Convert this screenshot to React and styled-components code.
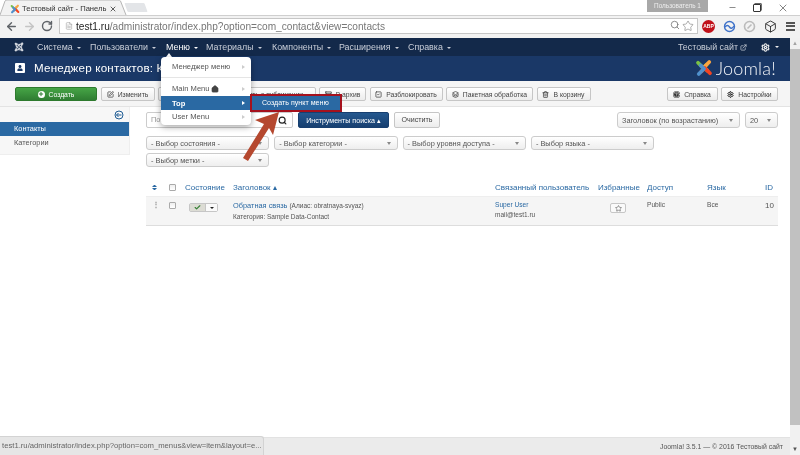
import React from "react";
import styled, { createGlobalStyle } from "styled-components";
import { ArrowLeft, ArrowRight, RotateCw, Search, Star, X, Minus, Box, Check, Settings, SquarePen, Archive, SquareCheck, Trash2, ExternalLink, FileText, Layers, House, Plus, CircleHelp } from "lucide-react";
import { FaJoomla, FaUser } from "react-icons/fa";

const Global = createGlobalStyle`
	html, body {
		margin: 0;
		padding: 0;
		background: #fff;
		overflow: hidden;
	}
	* {
		box-sizing: border-box;
	}
`;

const Frame = styled.div`
	position: relative;
	width: 800px;
	height: 455px;
	overflow: hidden;
	display: flex;
	flex-direction: column;
	font-family: "Liberation Sans", Arial, sans-serif;
	color: #555;
	background: #fff;
	filter: blur(0.3px);
`;

const TabStrip = styled.div`
	height: 15px;
	display: flex;
	align-items: flex-start;
	background: #fff;
`;

const Tab = styled.div`
	position: relative;
	width: 126px;
	height: 15px;
	padding: 2px 0 0 10px;
	display: flex;
	align-items: center;
	font-size: 7.6px;
	color: #333;
	white-space: nowrap;
`;

const TabShape = styled.svg`
	position: absolute;
	left: 0;
	top: 0;
`;

const TabFavicon = styled.span`
	position: relative;
	display: flex;
	margin-right: 2px;
`;

const TabTitle = styled.span`
	position: relative;
	width: 85px;
	overflow: hidden;
`;

const TabClose = styled.span`
	position: relative;
	display: flex;
	margin-left: 2px;
	color: #444;
`;

const NewTab = styled.div`
	width: 20px;
	height: 9px;
	margin-top: 3px;
	background: #e3e5e8;
	transform: skewX(20deg);
	border-radius: 1px;
`;

const Profile = styled.div`
	margin-left: auto;
	width: 61px;
	height: 12px;
	background: #a8a8a8;
	color: #eee;
	font-size: 6.4px;
	line-height: 12px;
	text-align: center;
	margin-right: 18px;
`;

const WindowButtons = styled.div`
	display: flex;
	width: 74px;
	height: 15px;
	gap: 13px;
	padding-left: 2px;
	align-items: center;
	color: #333;
`;

const Restore = styled.span`
	display: block;
	width: 8px;
	height: 8px;
	border: 1px solid #333;
	border-radius: 1px;
	margin: 0 3px;
	box-shadow: 1px -1px 0 -0.3px #333;
`;

const AddressBar = styled.div`
	height: 23px;
	display: flex;
	align-items: center;
	background: #f2f2f2;
	border-top: 1px solid #cfcfcf;
	padding: 0 0 2px 2px;
`;

const NavIcon = styled.span`
	width: 18px;
	display: flex;
	justify-content: center;
	color: ${(p) => p.$color || "#5f6368"};
`;

const Omnibox = styled.div`
	width: 639px;
	height: 16px;
	margin-left: 3px;
	background: #fff;
	border: 1px solid #c6c6c6;
	display: flex;
	align-items: center;
	padding: 0 3px 0 5px;
	gap: 3px;
	font-size: 10.15px;
	color: #777;
	white-space: nowrap;
`;

const Host = styled.span`
	color: #222;
`;

const OmniIcons = styled.span`
	margin-left: auto;
	display: flex;
	gap: 2px;
	color: #777;
`;

const Extensions = styled.div`
	display: flex;
	align-items: center;
	margin-left: 4px;
	gap: 7.7px;
`;

const Abp = styled.span`
	width: 13px;
	height: 13px;
	border-radius: 50%;
	background: #c0111a;
	color: #fff;
	font-size: 5px;
	font-weight: bold;
	display: flex;
	align-items: center;
	justify-content: center;
`;

const Hamburger = styled.span`
	width: 9px;
	height: 9px;
	margin-left: 1px;
	border-top: 2px solid #555;
	border-bottom: 2px solid #555;
	position: relative;
	&::after {
		content: "";
		position: absolute;
		left: 0;
		right: 0;
		top: 1.5px;
		height: 2px;
		background: #555;
	}
`;

const SiteRow = styled.div`
	flex: 1;
	display: flex;
	min-height: 0;
`;

const Site = styled.div`
	flex: 1;
	display: flex;
	flex-direction: column;
	min-width: 0;
`;

const Scrollbar = styled.div`
	width: 10px;
	background: #f1f1f1;
	display: flex;
	flex-direction: column;
	align-items: center;
	font-size: 6px;
`;

const ScrollArrow = styled.span`
	height: 11px;
	line-height: 11px;
	color: ${(p) => p.$dark ? "#555" : "#a3a3a3"};
`;

const ScrollThumb = styled.div`
	width: 100%;
	flex: 1;
	background: #c1c1c1;
	margin-bottom: 19px;
`;

const NavBar = styled.div`
	height: 18px;
	background: #13294a;
	display: flex;
	align-items: center;
	padding-left: 14px;
	font-size: 8.9px;
	color: #c9ced8;
	white-space: nowrap;
`;

const NavLogo = styled.span`
	display: flex;
	width: 23px;
	color: #d5d9e0;
`;

const NavItem = styled.span`
	width: ${(p) => p.$w}px;
	color: ${(p) => p.$active ? "#fff" : "#c9ced8"};
	&::after {
		content: "";
		display: inline-block;
		margin-left: 4px;
		vertical-align: 1px;
		border-top: 2.5px solid currentColor;
		border-left: 2.5px solid transparent;
		border-right: 2.5px solid transparent;
	}
`;

const NavRight = styled.span`
	margin-left: auto;
	display: flex;
	align-items: center;
	gap: 2px;
`;

const GearMenu = styled.span`
	display: flex;
	align-items: center;
	gap: 5px;
	margin: 0 11px 0 14px;
	color: #eee;
`;

const Caret = styled.span`
	display: inline-block;
	border-top: 2.5px solid currentColor;
	border-left: 2.5px solid transparent;
	border-right: 2.5px solid transparent;
`;

const Header = styled.div`
	height: 25px;
	background: #1a3867;
	display: flex;
	align-items: center;
	padding: 0 14px 2px 15px;
	color: #fff;
`;

const HeaderIcon = styled.span`
	display: flex;
	align-items: center;
	justify-content: center;
	width: 10px;
	height: 10px;
	margin-right: 9px;
	border-radius: 1px;
	background: #fff;
	color: #1a3867;
`;

const Title = styled.h1`
	margin: 0;
	font-size: 11.6px;
	font-weight: normal;
	letter-spacing: 0.2px;
	white-space: nowrap;
`;

const Brand = styled.div`
	margin-left: auto;
	display: flex;
	align-items: center;
	gap: 3px;
`;

const BrandName = styled.span`
	font-family: "Lato", sans-serif;
	font-weight: 300;
	font-size: 18px;
	letter-spacing: 0.2px;
	color: #f2f4f8;
`;

const Toolbar = styled.div`
	height: 26px;
	background: #f5f5f5;
	border-bottom: 1px solid #e3e3e3;
	display: flex;
	align-items: flex-start;
	padding: 6px 12px 0 15px;
	gap: 3.5px;
`;

const ToolButton = styled.button`
	width: ${(p) => p.$w}px;
	height: 14px;
	padding: 0;
	border: 1px solid ${(p) => p.$green ? "#2e7a2e" : "#c6c6c6"};
	border-radius: 2px;
	background: ${(p) => p.$green ? "linear-gradient(#46a546, #2f7d32)" : "linear-gradient(#fff, #ececec)"};
	color: ${(p) => p.$green ? "#fff" : "#444"};
	font-family: inherit;
	font-size: 6.8px;
	display: flex;
	align-items: center;
	justify-content: center;
	gap: 4px;
	white-space: nowrap;
	margin-left: ${(p) => p.$push ? "auto" : "0"};
`;

const RoundIcon = styled.span`
	width: 7px;
	height: 7px;
	border-radius: 50%;
	background: ${(p) => p.$bg || "#fff"};
	color: ${(p) => p.$fg || "#2f7d32"};
	display: flex;
	align-items: center;
	justify-content: center;
`;

const Content = styled.div`
	flex: 1;
	display: flex;
	min-height: 0;
`;

const Sidebar = styled.div`
	width: 130px;
	height: 48px;
	background: #f7f7f7;
	border-right: 1px solid #eee;
	border-bottom: 1px solid #eee;
	font-size: 7.4px;
	color: #555;
`;

const SideToggle = styled.div`
	height: 15px;
	display: flex;
	justify-content: flex-end;
	align-items: center;
	padding-right: 5px;
`;

const SideItem = styled.div`
	height: 14px;
	line-height: 14px;
	padding-left: 14px;
	background: ${(p) => p.$active ? "#2a69a3" : "transparent"};
	color: ${(p) => p.$active ? "#fff" : "#555"};
`;

const Main = styled.div`
	flex: 1;
	padding: 5px 12px 0 16px;
	min-width: 0;
`;

const FilterRow = styled.div`
	display: flex;
	align-items: center;
	height: 16px;
	gap: 5px;
`;

const SearchBox = styled.div`
	width: 147px;
	height: 16px;
	display: flex;
	border: 1px solid #ccc;
	border-radius: 2px;
	font-size: 7.4px;
	line-height: 14px;
	color: #999;
	padding-left: 4px;
	background: #fff;
`;

const SearchIcon = styled.span`
	margin-left: auto;
	width: 14px;
	display: flex;
	align-items: center;
	color: #222;
`;

const ActionButton = styled.button`
	width: ${(p) => p.$w}px;
	height: 16px;
	padding: 0;
	border: 1px solid ${(p) => p.$blue ? "#173f70" : "#c6c6c6"};
	border-radius: 2px;
	background: ${(p) => p.$blue ? "linear-gradient(#24588f, #173f70)" : "linear-gradient(#fff, #ececec)"};
	color: ${(p) => p.$blue ? "#fff" : "#444"};
	font-family: inherit;
	font-size: 7.1px;
	white-space: nowrap;
`;

const SelectRows = styled.div`
	display: flex;
	flex-wrap: wrap;
	gap: 3px 5px;
	margin-top: 8px;
	width: 520px;
`;

const Select = styled.div`
	width: ${(p) => p.$w || 123.3}px;
	height: ${(p) => p.$h || 14}px;
	border: 1px solid #ccc;
	border-radius: 3px;
	background: linear-gradient(#fff, #eee);
	display: flex;
	align-items: center;
	justify-content: space-between;
	padding: 0 6px 0 4px;
	font-size: 7.4px;
	color: #555;
	white-space: nowrap;
	margin-left: ${(p) => p.$push ? "auto" : "0"};
	&::after {
		content: "";
		border-top: 3px solid #888;
		border-left: 2px solid transparent;
		border-right: 2px solid transparent;
	}
`;

const Table = styled.div`
	margin-top: 11px;
`;

const TableRow = styled.div`
	display: grid;
	grid-template-columns: 17px 16px 48px 262px 103px 49px 60px 58px 1fr;
	padding-left: 6px;
	align-items: ${(p) => p.$head ? "center" : "start"};
	height: ${(p) => p.$head ? 18 : 30}px;
	background: ${(p) => p.$head ? "transparent" : "#f5f5f5"};
	border-bottom: ${(p) => p.$head ? 0 : 1}px solid #ddd;
	border-top: ${(p) => p.$head ? 0 : 1}px solid #eee;
	padding-top: ${(p) => p.$head ? 0 : 4}px;
	color: ${(p) => p.$head ? "#2a69a3" : "#555"};
	font-size: ${(p) => p.$head ? 8 : 6.6}px;
	white-space: nowrap;
`;

const Sort = styled.span`
	display: flex;
	flex-direction: column;
	gap: 1px;
	width: 5px;
	&::before, &::after {
		content: "";
		border-left: 2px solid transparent;
		border-right: 2px solid transparent;
	}
	&::before {
		border-bottom: 2.5px solid #2a69a3;
	}
	&::after {
		border-top: 2.5px solid #2a69a3;
	}
`;

const Checkbox = styled.span`
	display: block;
	width: 7px;
	height: 7px;
	margin-top: 1px;
	border: 1px solid #aaa;
	border-radius: 1px;
	background: linear-gradient(#eee, #fff);
`;

const Grip = styled.span`
	color: #999;
	font-size: 8px;
	line-height: 8px;
	font-weight: bold;
`;

const StatusToggle = styled.span`
	display: flex;
	width: 29px;
	height: 9px;
	margin-top: 2px;
	border: 1px solid #c6c6c6;
	border-radius: 2px;
	margin-left: 4px;
`;

const StatusCheck = styled.span`
	width: 15px;
	background: #dcdcd4;
	display: flex;
	align-items: center;
	justify-content: center;
	color: #378137;
`;

const StatusDrop = styled.span`
	flex: 1;
	background: #fafafa;
	border-left: 1px solid #c6c6c6;
	display: flex;
	align-items: center;
	justify-content: center;
	color: #222;
`;

const TitleLink = styled.span`
	color: #2a69a3;
	font-size: 7.4px;
`;

const Alias = styled.span`
	font-size: 6.5px;
	color: #555;
	margin-left: 2px;
`;

const SubLine = styled.div`
	font-size: 6.5px;
	margin-top: 3px;
	color: #555;
`;

const UserLink = styled.div`
	color: #2a69a3;
	font-size: 6.6px;
`;

const FavButton = styled.span`
	width: 16px;
	height: 10px;
	margin: 2px 0 0 12px;
	border: 1px solid #c6c6c6;
	border-radius: 2px;
	display: flex;
	align-items: center;
	justify-content: center;
	background: #fafafa;
	color: #555;
`;

const IdCell = styled.span`
	font-size: 8px;
`;

const Footer = styled.div`
	height: 18px;
	background: #ebebeb;
	border-top: 1px solid #e2e2e2;
	display: flex;
	align-items: center;
	justify-content: flex-end;
	padding: 0 7px 0 0;
	font-size: 6.9px;
	color: #555;
`;

const StatusBubble = styled.div`
	position: absolute;
	left: 0;
	bottom: 0;
	width: 264px;
	height: 19px;
	background: #e6e6e6;
	border: 1px solid #d3d3d3;
	border-left: 0;
	border-bottom: 0;
	border-radius: 0 3px 0 0;
	padding-left: 2px;
	font-size: 7.7px;
	line-height: 18px;
	color: #666;
	white-space: nowrap;
`;

const MenuTip = styled.span`
	position: absolute;
	left: 166px;
	top: 53px;
	border-bottom: 4px solid #fff;
	border-left: 3px solid transparent;
	border-right: 3px solid transparent;
`;

const Dropdown = styled.div`
	position: absolute;
	left: 161px;
	top: 57px;
	width: 90px;
	height: 68px;
	padding-top: 3px;
	background: #fff;
	border-radius: 4px;
	box-shadow: 0 2px 6px rgba(0, 0, 0, 0.35);
	font-size: 7.6px;
`;

const DropItem = styled.div`
	height: ${(p) => p.$h || 13}px;
	display: flex;
	align-items: center;
	justify-content: space-between;
	padding: 0 6px 0 11px;
	background: ${(p) => p.$active ? "#2a69a3" : "transparent"};
	color: ${(p) => p.$active ? "#fff" : "#555"};
	font-weight: ${(p) => p.$active ? "bold" : "normal"};
	white-space: nowrap;
	&::after {
		content: "";
		border-left: 3px solid ${(p) => p.$active ? "#fff" : "#ccc"};
		border-top: 2.5px solid transparent;
		border-bottom: 2.5px solid transparent;
	}
`;

const DropLabel = styled.span`
	display: flex;
	align-items: center;
	gap: 1px;
	color: inherit;
`;

const DropDivider = styled.div`
	height: 1px;
	margin: 4px 0 3px;
	background: #e5e5e5;
`;

const SubMenu = styled.div`
	position: absolute;
	left: 250px;
	top: 94px;
	width: 92px;
	height: 18px;
	border: 2px solid #a5111d;
	background: #2a69a3;
	color: #fff;
	font-size: 7.1px;
	line-height: 14px;
	padding-left: 10px;
	white-space: nowrap;
`;

const Pointer = styled.svg`
	position: absolute;
	left: 0;
	top: 0;
	pointer-events: none;
`;

const armColors = ["#7ac143", "#f9a541", "#f44321", "#5091cd"];

const JoomlaMark = ({ size }) => (
	<svg width={size} height={size} viewBox="0 0 24 24" fill="none" strokeWidth="5" strokeLinecap="round" strokeLinejoin="round">
		{armColors.map((color, i) => (
			<path key={color} d="M4 5 L11 12 L15.5 7.5" stroke={color} transform={`rotate(${i * 90} 12 12)`} />
		))}
	</svg>
);

const App = () => {
	return (
		<>
			<Global />
			<Frame>
				<TabStrip>
					<Tab>
						<TabShape width="127" height="15" viewBox="0 0 127 15">
							<path d="M0 15 L5 1 Q5.5 0 7 0 L118 0 Q120 0 120.5 1 L126 15" fill="#f2f2f2" stroke="#b5b5b5" />
						</TabShape>
						<TabFavicon><JoomlaMark size={10} /></TabFavicon>
						<TabTitle>Тестовый сайт - Панель у</TabTitle>
						<TabClose><X size={8} strokeWidth={2.6} /></TabClose>
					</Tab>
					<NewTab />
					<Profile>Пользователь 1</Profile>
					<WindowButtons>
						<Minus size={9} strokeWidth={1.5} />
						<Restore />
						<X size={12} strokeWidth={1.2} />
					</WindowButtons>
				</TabStrip>
				<AddressBar>
					<NavIcon><ArrowLeft size={13} strokeWidth={2.6} /></NavIcon>
					<NavIcon $color="#c4c4c4"><ArrowRight size={13} strokeWidth={2.6} /></NavIcon>
					<NavIcon><RotateCw size={12} strokeWidth={2.8} /></NavIcon>
					<Omnibox>
						<FileText size={8} strokeWidth={1.4} color="#888" />
						<span><Host>test1.ru</Host>/administrator/index.php?option=com_contact&amp;view=contacts</span>
						<OmniIcons>
							<Search size={10} />
							<Star size={12} strokeWidth={1.2} />
						</OmniIcons>
					</Omnibox>
					<Extensions>
						<Abp>ABP</Abp>
						<svg width="13" height="13" viewBox="0 0 13 13" fill="none" stroke="#3f72c9" strokeWidth="1.4">
							<circle cx="6.5" cy="6.5" r="5" />
							<path d="M2 7 Q4.5 4 6.5 7 T11 6" />
						</svg>
						<svg width="13" height="13" viewBox="0 0 13 13" fill="none" stroke="#bbb" strokeWidth="1.6">
							<circle cx="6.5" cy="6.5" r="5" />
							<path d="M4.5 8.5 L8.5 4.5" />
						</svg>
						<Box size={13} strokeWidth={1.6} color="#222" />
						<Hamburger />
					</Extensions>
				</AddressBar>
				<SiteRow>
					<Site>
						<NavBar>
							<NavLogo><FaJoomla size={10} /></NavLogo>
							<NavItem $w={53}>Система</NavItem>
							<NavItem $w={76}>Пользователи</NavItem>
							<NavItem $w={40} $active>Меню</NavItem>
							<NavItem $w={66}>Материалы</NavItem>
							<NavItem $w={67}>Компоненты</NavItem>
							<NavItem $w={69}>Расширения</NavItem>
							<NavItem $w={50}>Справка</NavItem>
							<NavRight>
								Тестовый сайт
								<ExternalLink size={7} strokeWidth={2.4} />
							</NavRight>
							<GearMenu>
								<Settings size={9} strokeWidth={3} />
								<Caret />
							</GearMenu>
						</NavBar>
						<Header>
							<HeaderIcon><FaUser size={6} /></HeaderIcon>
							<Title>Менеджер контактов: Контакты</Title>
							<Brand>
								<JoomlaMark size={18} />
								<BrandName>Joomla!</BrandName>
							</Brand>
						</Header>
						<Toolbar>
							<ToolButton $w={82} $green><RoundIcon><Plus size={6} strokeWidth={4} /></RoundIcon>Создать</ToolButton>
							<ToolButton $w={54}><SquarePen size={7} strokeWidth={2.6} />Изменить</ToolButton>
							<ToolButton $w={66}>Опубликовать</ToolButton>
							<ToolButton $w={88}>Снять с публикации</ToolButton>
							<ToolButton $w={47}><Archive size={7} strokeWidth={2.6} />В архив</ToolButton>
							<ToolButton $w={73}><SquareCheck size={7} strokeWidth={2.6} />Разблокировать</ToolButton>
							<ToolButton $w={87}><Layers size={7} strokeWidth={2.6} />Пакетная обработка</ToolButton>
							<ToolButton $w={54}><Trash2 size={7} strokeWidth={2.6} />В корзину</ToolButton>
							<ToolButton $w={51} $push><RoundIcon $bg="#333" $fg="#fff"><CircleHelp size={7} strokeWidth={2} /></RoundIcon>Справка</ToolButton>
							<ToolButton $w={57}><Settings size={7} strokeWidth={3.4} color="#222" />Настройки</ToolButton>
						</Toolbar>
						<Content>
							<Sidebar>
								<SideToggle>
									<svg width="10" height="10" viewBox="0 0 10 10" fill="none" stroke="#1f5c94" strokeWidth="1">
										<circle cx="5" cy="5" r="4" />
										<path d="M7.5 5 L2.5 5 M4.5 3 L2.5 5 L4.5 7" />
									</svg>
								</SideToggle>
								<SideItem $active>Контакты</SideItem>
								<SideItem>Категории</SideItem>
							</Sidebar>
							<Main>
								<FilterRow>
									<SearchBox>Поиск<SearchIcon><Search size={9} strokeWidth={3} /></SearchIcon></SearchBox>
									<ActionButton $w={91} $blue>Инструменты поиска ▴</ActionButton>
									<ActionButton $w={46}>Очистить</ActionButton>
									<Select $w={123} $h={16} $push>Заголовок (по возрастанию)</Select>
									<Select $w={33} $h={16}>20</Select>
								</FilterRow>
								<SelectRows>
									<Select>- Выбор состояния -</Select>
									<Select>- Выбор категории -</Select>
									<Select>- Выбор уровня доступа -</Select>
									<Select>- Выбор языка -</Select>
									<Select>- Выбор метки -</Select>
								</SelectRows>
								<Table>
									<TableRow $head>
										<Sort />
										<Checkbox />
										<span>Состояние</span>
										<span>Заголовок ▴</span>
										<span>Связанный пользователь</span>
										<span>Избранные</span>
										<span>Доступ</span>
										<span>Язык</span>
										<span>ID</span>
									</TableRow>
									<TableRow>
										<Grip>⋮</Grip>
										<Checkbox />
										<StatusToggle>
											<StatusCheck><Check size={7} strokeWidth={4} /></StatusCheck>
											<StatusDrop><Caret /></StatusDrop>
										</StatusToggle>
										<div>
											<TitleLink>Обратная связь</TitleLink>
											<Alias>(Алиас: obratnaya-svyaz)</Alias>
											<SubLine>Категория: Sample Data-Contact</SubLine>
										</div>
										<div>
											<UserLink>Super User</UserLink>
											<SubLine>mail@test1.ru</SubLine>
										</div>
										<FavButton><Star size={7} /></FavButton>
										<span>Public</span>
										<span>Все</span>
										<IdCell>10</IdCell>
									</TableRow>
								</Table>
							</Main>
						</Content>
						<Footer>Joomla! 3.5.1 — © 2016 Тестовый сайт</Footer>
					</Site>
					<Scrollbar>
						<ScrollArrow>▲</ScrollArrow>
						<ScrollThumb />
						<ScrollArrow $dark>▼</ScrollArrow>
					</Scrollbar>
				</SiteRow>
				<StatusBubble>test1.ru/administrator/index.php?option=com_menus&amp;view=item&amp;layout=e...</StatusBubble>
				<MenuTip />
				<Dropdown>
					<DropItem>Менеджер меню</DropItem>
					<DropDivider />
					<DropItem $h={15}>
						<DropLabel>Main Menu <House size={8} fill="#444" color="#444" /></DropLabel>
					</DropItem>
					<DropItem $h={14} $active>Top</DropItem>
					<DropItem>User Menu</DropItem>
				</Dropdown>
				<SubMenu>Создать пункт меню</SubMenu>
				<Pointer width="800" height="455" viewBox="0 0 800 455">
					<path d="M279 112 L255 120 L264 124 L243 158 L248 161 L269 128 L273 135 Z" fill="#b5482f" />
				</Pointer>
			</Frame>
		</>
	);
};

export default App;
